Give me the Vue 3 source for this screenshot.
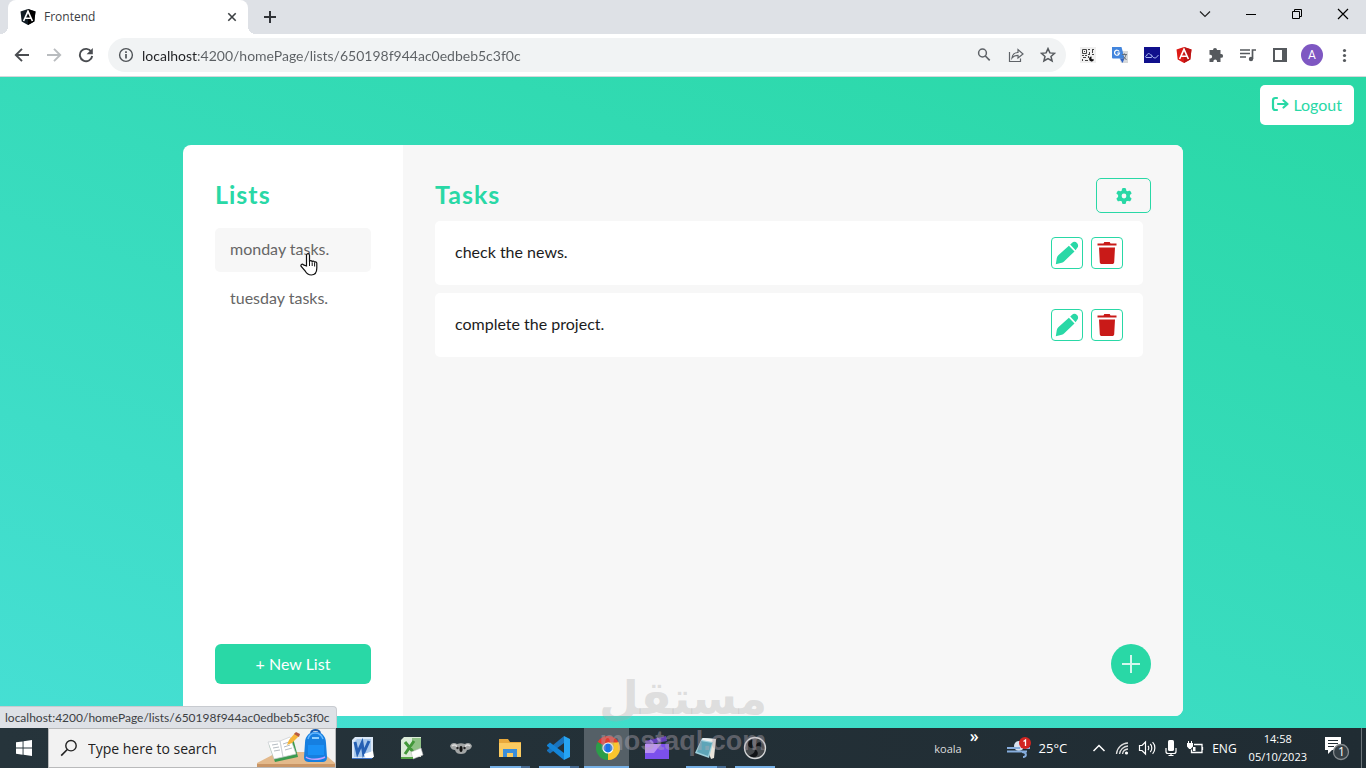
<script setup>
import { ref } from 'vue'

const address = ref('localhost:4200/homePage/lists/650198f944ac0edbeb5c3f0c')
const lists = [
  { id: 1, title: 'monday tasks.', active: true },
  { id: 2, title: 'tuesday tasks.', active: false }
]
const tasks = [
  { id: 1, title: 'check the news.' },
  { id: 2, title: 'complete the project.' }
]
</script>

<template>
  <div class="screen">
    <header class="tabstrip">
      <div class="tab">
        <svg class="fav" viewBox="0 0 16 16" width="16" height="16">
          <path d="M8 0 15.5 2.6 14.3 12.4 8 16 1.7 12.4.5 2.6Z" fill="#111c24" />
          <path d="M8 0 15.5 2.6 14.3 12.4 8 16Z" fill="#000" />
          <path d="M3.6 12 8 2.3 12.4 12M5.6 9.2h4.8" fill="none" stroke="#fff" stroke-width="1.6" />
        </svg>
        <span class="tab-title">Frontend</span>
        <button class="plain tab-close" aria-label="Close tab">
          <svg viewBox="0 0 10 10" width="10" height="10"><path d="M1.3 1.3l7.4 7.4M8.7 1.3L1.3 8.7" stroke="#3c4043" stroke-width="1.6" /></svg>
        </button>
      </div>
      <button class="plain new-tab" aria-label="New tab">
        <svg viewBox="0 0 14 14" width="14" height="14"><path d="M7 1v12M1 7h12" stroke="#303338" stroke-width="2" /></svg>
      </button>
      <div class="win">
        <button class="plain" aria-label="Search tabs"><svg viewBox="0 0 12 12" width="12" height="12"><path d="M1 3.5l5 5 5-5" fill="none" stroke="#222" stroke-width="1.2" /></svg></button>
        <button class="plain" aria-label="Minimize"><svg viewBox="0 0 12 12" width="12" height="12"><path d="M1 6.5h10" stroke="#000" /></svg></button>
        <button class="plain" aria-label="Restore"><svg viewBox="0 0 12 12" width="12" height="12"><path d="M1.5 3.5h7v7h-7zM3.5 3.5v-2h7v7h-2" fill="none" stroke="#000" /></svg></button>
        <button class="plain" aria-label="Close"><svg viewBox="0 0 12 12" width="12" height="12"><path d="M1 1l10 10M11 1L1 11" stroke="#000" stroke-width="1.2" /></svg></button>
      </div>
    </header>

    <nav class="toolbar">
      <div class="nav-buttons">
        <button class="plain" aria-label="Back"><svg viewBox="0 0 16 16" width="16" height="16"><path d="M15 8H2M8 1.8L1.8 8l6.2 6.2" fill="none" stroke="#4a4d51" stroke-width="1.9" /></svg></button>
        <button class="plain" aria-label="Forward"><svg viewBox="0 0 16 16" width="16" height="16"><path d="M1 8h13M8 1.8L14.2 8 8 14.2" fill="none" stroke="#b9bcbf" stroke-width="1.9" /></svg></button>
        <button class="plain" aria-label="Reload"><svg viewBox="0 0 16 16" width="16" height="16"><path d="M13.3 4.7A6.2 6.2 0 1 0 14.2 9" fill="none" stroke="#4a4d51" stroke-width="1.9" /><path d="M14.8 1v6.2H8.6z" fill="#4a4d51" /></svg></button>
      </div>
      <div class="omnibox">
        <svg viewBox="0 0 16 16" width="16" height="16"><circle cx="8" cy="8" r="6.4" fill="none" stroke="#4f5357" stroke-width="1.4" /><path d="M8 7v4.500M8 4.300v1.700" stroke="#4f5357" stroke-width="1.7" /></svg>
        <input v-model="address" class="address" aria-label="Address" />
        <button class="plain" aria-label="Zoom"><svg viewBox="0 0 16 16" width="16" height="16"><circle cx="6.5" cy="6" r="3.9" fill="none" stroke="#5f6368" stroke-width="1.5" /><path d="M9.4 9l4.300 4.300" stroke="#5f6368" stroke-width="1.7" /></svg></button>
        <button class="plain" aria-label="Share"><svg viewBox="0 0 16 16" width="16" height="16"><path d="M1.500 5v9.500h11V11.500" fill="none" stroke="#5f6368" stroke-width="1.2" /><path d="M4 11c.5-4 3-5.500 6-5.500V2.500L15 7l-5 4V8.300C7.500 8.300 5.500 9 4 11z" fill="none" stroke="#5f6368" stroke-width="1.2" /></svg></button>
        <button class="plain" aria-label="Bookmark"><svg viewBox="0 0 16 16" width="16" height="16"><path d="M8 1.600l1.900 4.300 4.700.400-3.600 3.100 1.100 4.600L8 11.600 3.900 14 5 9.400 1.400 6.300l4.700-.400z" fill="none" stroke="#55595d" stroke-width="1.5" /></svg></button>
      </div>
      <div class="extensions">
        <button class="plain" aria-label="QR code">
          <svg viewBox="0 0 16 16" width="16" height="16"><path d="M0 0h16v16H0z" fill="#f0f0f0" /><path d="M2.500 2.500h4v4h-4z" fill="none" stroke="#444" /><path d="M4 4h1v1H4zM8 2h2v1H8zM9 5h1v3H8V7h1zM12 2h2v1h-1v3h-1zM2 8h2v1H2zM5 8h2v1H5zM3 10h3v1H3zM2 12h1v2H2zM5 13h3v1H5zM8 9h1v2H8zM12 7h2v1h-2z" fill="#444" /><path d="M11.500 9.500a2.500 2.500 0 1 0 2.500 3l-2.500-.5z" fill="#111" /></svg>
        </button>
        <button class="plain" aria-label="Translate">
          <svg viewBox="0 0 16 16" width="16" height="16"><path d="M5 4h11v12H9z" fill="#d7d9db" /><path d="M0 0h9.500l3 11.500H1a1 1 0 0 1-1-1z" fill="#4285dd" /><path d="M8 11.500h4.500L10.500 16z" fill="#2c62c4" /><path d="M7.200 4.500A2.500 2.500 0 1 0 7.500 6H5.200" fill="none" stroke="#fff" stroke-width="1.2" /><path d="M10 7.500h5M12.500 6.500v1M14 7.500c-.5 3-2 4-3 5M11.500 9.500l3 3.500" fill="none" stroke="#68717a" /></svg>
        </button>
        <button class="plain" aria-label="Cloud extension">
          <svg viewBox="0 0 16 16" width="16" height="16"><path d="M0 0h16v16H0z" fill="#10108c" /><path d="M2 10.500h5c2 0 1.500-3-.5-2.500-.5-2-3.500-2-3.500.5-1.500 0-2 1.500-1 2M7 8.500c2 1 2 2.500 4 2.500 1.500 0 2-1.500 3.500-3" fill="none" stroke="#a8b8f0" /></svg>
        </button>
        <button class="plain" aria-label="Angular DevTools">
          <svg viewBox="0 0 16 16" width="16" height="16"><path d="M8 0 15.500 2.600 14.300 12.400 8 16 1.700 12.400.5 2.600Z" fill="#dd1b16" /><path d="M8 0 15.500 2.600 14.300 12.400 8 16Z" fill="#b91414" /><path d="M3.600 12 8 2.300 12.400 12M5.600 9.200h4.800" fill="none" stroke="#fff" stroke-width="1.6" /></svg>
        </button>
        <button class="plain" aria-label="Extensions">
          <svg viewBox="0 0 16 16" width="16" height="16"><path d="M5 3a2 2 0 0 1 4 0h3.500v4h.7a1.900 1.900 0 0 1 0 3.800h-.7V15H9v-.8a1.800 1.800 0 0 0-3.600 0v.8H1.500v-3.600h.8a1.800 1.800 0 0 0 0-3.700h-.8V3z" fill="#55595d" /></svg>
        </button>
        <button class="plain" aria-label="Media controls">
          <svg viewBox="0 0 16 16" width="16" height="16"><path d="M0 3h10M0 6.500h10M0 10h6" stroke="#55595d" stroke-width="1.6" /><path d="M12.500 12V3H16" fill="none" stroke="#55595d" stroke-width="1.7" /><circle cx="11" cy="12" r="2.2" fill="#55595d" /></svg>
        </button>
        <button class="plain" aria-label="Side panel">
          <svg viewBox="0 0 16 16" width="16" height="16"><path d="M2 2h12v12H2z" fill="none" stroke="#55595d" stroke-width="2" /><path d="M10 2H14v12h-4z" fill="#55595d" /></svg>
        </button>
        <button class="plain" aria-label="Profile"><span class="avatar">A</span></button>
        <button class="plain" aria-label="Menu">
          <svg viewBox="0 0 16 16" width="16" height="16"><g fill="#55595d"><circle cx="8.5" cy="3.5" r="1.6" /><circle cx="8.5" cy="8.5" r="1.6" /><circle cx="8.5" cy="13.500" r="1.6" /></g></svg>
        </button>
      </div>
    </nav>

    <main class="page">
      <div class="topbar">
        <button class="logout">
          <svg viewBox="0 0 18 16" width="18" height="16"><path d="M6 2H4.200A2.200 2.200 0 0 0 2 4.200v7.600A2.200 2.200 0 0 0 4.200 14H6M7 8h9M12.500 4.500L16.500 8l-4 3.500" fill="none" stroke="#29d8a6" stroke-width="2.2" stroke-linecap="round" stroke-linejoin="round" /></svg>
          <span>Logout</span>
        </button>
      </div>
      <div class="card">
        <aside class="sidebar">
          <h1>Lists</h1>
          <div class="list-menu">
            <a v-for="list in lists" :key="list.id" href="#" class="list-item" :class="{ active: list.active }">{{ list.title }}</a>
          </div>
          <button class="new-list">+ New List</button>
        </aside>
        <section class="content">
          <div class="content-head">
            <h1>Tasks</h1>
            <button class="settings" aria-label="List settings">
              <svg viewBox="0 0 16 16" width="16" height="16"><g fill="#29d8a6"><circle cx="8" cy="8" r="6" /><rect x="6" y="0" width="4" height="16" rx="1.2" /><rect x="6" y="0" width="4" height="16" rx="1.2" transform="rotate(60 8 8)" /><rect x="6" y="0" width="4" height="16" rx="1.2" transform="rotate(120 8 8)" /></g><circle cx="8" cy="8" r="2.4" fill="#f7f7f7" /></svg>
            </button>
          </div>
          <div class="tasks">
            <div v-for="task in tasks" :key="task.id" class="task">
              <span class="task-title">{{ task.title }}</span>
              <button class="icon-button" :aria-label="'Edit ' + task.title">
                <svg viewBox="0 0 24 24" width="24" height="24"><path d="M.8 23.200l1-6.200c.2-1.200.8-2 1.500-2.700L13.900 4.800l5.600 5.600L9.300 20.200c-.8.800-1.500 1.200-2.500 1.500zM15.200 3.600l1.700-1.700c1.600-1.600 3.800-1.200 5.100.1 1.300 1.300 1.700 3.500.1 5.100l-1.500 2.100z" fill="#29d8a6" /></svg>
              </button>
              <button class="icon-button" :aria-label="'Delete ' + task.title">
                <svg viewBox="0 0 24 24" width="24" height="24"><path d="M2.500 4.500v-2h6L9.300 1h5.400l.8 1.500h6v2zM4 6.500h16l-.8 14.700c-.1 1.100-.8 1.800-2.100 1.800H6.900c-1.300 0-2-.7-2.100-1.800z" fill="#c91a18" /></svg>
              </button>
            </div>
          </div>
          <button class="add" aria-label="New task"><svg viewBox="0 0 18 18" width="18" height="18"><path d="M9 0v18M0 9h18" stroke="#d4f7ed" stroke-width="2" /></svg></button>
        </section>
      </div>
      <div class="status">localhost:4200/homePage/lists/650198f944ac0edbeb5c3f0c</div>
    </main>

    <footer class="taskbar">
      <button class="plain start" aria-label="Start"><svg viewBox="0 0 16 16" width="16" height="16"><path d="M0 2.300L6.600 1.400v6.200H0zM7.500 1.200L16 0v7.600H7.500zM0 8.500h6.600v6.200L0 13.800zM7.500 8.500H16V16l-8.500-1.200z" fill="#fff" /></svg></button>
      <div class="search">
        <svg viewBox="0 0 18 18" width="18" height="18"><circle cx="11" cy="6.7" r="5.2" fill="none" stroke="#222" stroke-width="1.4" /><path d="M7.300 10.500L1.200 16.600" stroke="#222" stroke-width="1.6" /></svg>
        <input class="search-input" aria-label="Search" placeholder="Type here to search" />
        <svg class="search-art" viewBox="0 0 78 38" width="78" height="38">
          <path d="M0 38v-4l21-11h44l13 11v4z" fill="#e3b98b" /><path d="M0 35h78v3H0z" fill="#c99565" />
          <path d="M12 16l24-7 5 19-23 5z" fill="#3a9a4e" /><path d="M11 13l12-1 3 16-9 2zM23 12l10-4 6 17-13 3z" fill="#fff" stroke="#c7ccd0" stroke-width=".7" />
          <path d="M15 16l6-1M16 19l6-1M17 22l6-1M26 15l6-2M27 18l6-2M28 21l7-2" stroke="#b5bcc2" />
          <path d="M30 16l2-5 6-7 4 3-7 7z" fill="#f5b53a" /><path d="M37 5l2-2 4 2-1 3z" fill="#b65a43" />
          <path d="M54 4c1-4 8-4 9 0" fill="none" stroke="#155bb0" stroke-width="2" />
          <path d="M48 14c0-15 21-15 21 0l1 14c0 4-2 5-5 5H53c-4 0-6-1-6-5z" fill="#167fe0" /><path d="M51 10c2-8 12-8 15 0" fill="none" stroke="#65b8ff" stroke-width="1.5" /><path d="M51 16h16v10H51z" fill="#1a90f5" /><path d="M49 28c3 3 14 3 19 0" fill="none" stroke="#c3a0ff" stroke-width="1.5" /><path d="M55 9h7" stroke="#8fd0ff" stroke-width="2" />
        </svg>
      </div>
      <div class="apps">
        <button class="app" aria-label="Word">
          <svg viewBox="0 0 24 24" width="24" height="24"><path d="M4 1h18v21H1V4z" fill="#dce8f6" /><path d="M6 3h14v14l-6 4H3V6z" fill="#a9c9ec" /><path d="M4 6l2.500 11L11 7l1.500 10L18 5" fill="none" stroke="#2560b4" stroke-width="3" /><path d="M13 18l9-3 1 6-8 2z" fill="#fff" /><path d="M1 22.500h20" stroke="#3d72c5" /></svg>
        </button>
        <button class="app" aria-label="Excel">
          <svg viewBox="0 0 24 24" width="24" height="24"><path d="M4 1h17v20H1V4z" fill="#dcebd8" /><path d="M12 2h9v13h-9z" fill="#8fc185" /><path d="M5 6l9 11M14 5L5 18" stroke="#43983a" stroke-width="3" /><path d="M11 16l10-4 2 7-10 4z" fill="#fff" stroke="#bbb" stroke-width=".6" /><path d="M1 22h12" stroke="#57a548" stroke-width="2" /></svg>
        </button>
        <button class="app" aria-label="Koala">
          <svg viewBox="0 0 24 24" width="24" height="24"><path d="M1 10c2-4 5-3 7-2 3-1 5-1 8 0 2-1 5-2 7 2-1 3-3 4-5 4-1 3-3 4-6 4s-5-1-6-4c-2 0-4-1-5-4z" fill="#a3a6a6" /><path d="M3 10c2-2 4-1 5 1M21 10c-2-2-4-1-5 1" fill="none" stroke="#ddd" stroke-width="1.5" /><ellipse cx="12" cy="13" rx="1.6" ry="3" fill="#111" /><circle cx="8.5" cy="12" r="1.2" fill="#222" /><circle cx="15.5" cy="12" r="1.2" fill="#222" /></svg>
        </button>
        <button class="app open stacked" aria-label="File Explorer">
          <svg viewBox="0 0 24 24" width="24" height="24"><path d="M1 3h9l2 3h11v15H1z" fill="#e9a93b" /><path d="M1 7h22v14H1z" fill="#fbcb61" /><path d="M5 13h14v8h-4v-4H9v4H5z" fill="#3b8edb" /></svg>
        </button>
        <button class="app open stacked" aria-label="Visual Studio Code">
          <svg viewBox="0 0 24 24" width="24" height="24"><path d="M17 0l6 3v18l-6 3z" fill="#26a4f2" /><path d="M17 7L3 17.500 0 15v-1L17 0z" fill="#1a73bd" /><path d="M17 17L3 6.500 0 9v1l17 14z" fill="#1485d8" /></svg>
        </button>
        <button class="app open current" aria-label="Chrome">
          <svg viewBox="0 0 24 24" width="24" height="24"><path d="M12 12L1.600 6A12 12 0 0 1 22.400 6z" fill="#e33b2e" /><path d="M12 12L22.400 6A12 12 0 0 1 12 24z" fill="#fbc52d" /><path d="M12 12v12A12 12 0 0 1 1.600 6z" fill="#2c9d49" /><path d="M12 6.500h10.700L17 14z" fill="#fbc52d" /><circle cx="12" cy="12" r="5.6" fill="#fff" /><circle cx="12" cy="12" r="4.4" fill="#1a73e8" /></svg>
        </button>
        <button class="app" aria-label="Video editor">
          <svg viewBox="0 0 24 24" width="24" height="24"><path d="M0 5l21-5 1 5L1 9z" fill="#6540b8" /><path d="M0 8h24v15H0z" fill="#7c50ed" /><path d="M0 8h16l-7 9H0z" fill="#bb91f2" /><path d="M5 4l3 3M12 2l3 3" stroke="#9c7be2" stroke-width="2" /></svg>
        </button>
        <button class="app open stacked" aria-label="Notepad">
          <svg viewBox="0 0 24 24" width="24" height="24"><path d="M9 2l13 1-2 19-3 1z" fill="#e9e4db" /><path d="M8 2l12 1-5 19L1 17z" fill="#9fd0dc" /><path d="M7 5l11 2-4 13-11-4z" fill="#5ea5b8" /><path d="M9 2l11 1-1 3L8 4z" fill="#eee" /></svg>
        </button>
        <button class="app open" aria-label="OBS">
          <svg viewBox="0 0 24 24" width="24" height="24"><circle cx="12" cy="12" r="10.5" fill="#45494c" stroke="#d5d7d8" stroke-width="1.3" /><g fill="#111417"><path d="M11.500 11.500C7 13.500 4 10 5.500 6.500 6.500 4.500 8.500 3.500 10 3.500 8 6 9 9.500 11.500 11.500z" /><path d="M12.500 11c.5-5 5-6 7.500-3 1.500 2 1 4.500 0 6-1-3.500-4.500-5-7.500-3z" /><path d="M12 13c4 2.500 3.500 7 0 8-2.500.5-5-.5-6-2 3.500 0 6-2.500 6-6z" /></g></svg>
        </button>
      </div>
      <div class="tray">
        <span class="koala">koala</span>
        <span class="more">»</span>
        <button class="plain weather">
          <svg viewBox="0 0 24 22" width="24" height="22"><circle cx="12" cy="9" r="5" fill="#d8e2ef" /><path d="M0 11h13M0 14.500h20M17 11h6" stroke="#86addd" stroke-width="2" /><path d="M15 15c5 0 5 5 1 5" fill="none" stroke="#86addd" stroke-width="2" /><circle cx="18" cy="6" r="6" fill="#d22522" /><path d="M16.500 4.500l2-1.500v6" fill="none" stroke="#fff" stroke-width="1.3" /></svg>
          <span>25°C</span>
        </button>
        <div class="tray-icons">
          <button class="plain" aria-label="Show hidden icons"><svg viewBox="0 0 16 16" width="16" height="16"><path d="M2.500 11L8 5.500l5.500 5.500" fill="none" stroke="#fff" stroke-width="1.5" /></svg></button>
          <button class="plain" aria-label="Network"><svg viewBox="0 0 16 16" width="16" height="16"><g fill="none" stroke="#ddd" stroke-width="1.3"><path d="M1.500 14A12 12 0 0 1 13 3" /><path d="M4.500 14A9 9 0 0 1 13 6" /><path d="M7.500 14A6 6 0 0 1 13 9" /></g><circle cx="11.5" cy="13" r="1.6" fill="#fff" /></svg></button>
          <button class="plain" aria-label="Volume"><svg viewBox="0 0 18 16" width="18" height="16"><g fill="none" stroke="#fff" stroke-width="1.2"><path d="M1.500 5.500h2.500l3.500-3.500v12L4 10.500H1.500z" /><path d="M10 6c1 1 1 3 0 4M12.300 4c2 2 2 6 0 8M14.600 2.200c3 3 3 8.600 0 11.600" /></g></svg></button>
          <button class="plain" aria-label="Microphone"><svg viewBox="0 0 16 16" width="16" height="16"><rect x="5" y="0" width="6" height="11" rx="1.5" fill="#fff" /><path d="M3 8v3.500q0 2 2 2h6q2 0 2-2V8M8 13.500v2.500M5.500 15.500h5" fill="none" stroke="#fff" stroke-width="1.2" /></svg></button>
          <button class="plain" aria-label="Battery"><svg viewBox="0 0 18 16" width="18" height="16"><path d="M8 4.500h8v8H5.500v-3M16.500 7v3" fill="none" stroke="#fff" stroke-width="1.3" /><path d="M7 7h2.500v4H7zM1 3h6v3.500L4.800 9H3.200L1 6.500z" fill="#fff" /><path d="M2.500 1v3M5.500 1v3" stroke="#fff" /></svg></button>
        </div>
        <span class="lang">ENG</span>
        <div class="clock"><span>14:58</span><span>05/10/2023</span></div>
        <button class="plain action" aria-label="Notifications"><svg viewBox="0 0 26 26" width="26" height="26"><path d="M1 2h16v13H8l-4 4v-4H1z" fill="#fff" /><path d="M4 5.500h10M4 8.500h10M4 11.500h6" stroke="#222e35" /><circle cx="17" cy="17" r="7.500" fill="#353f45" stroke="#858b8e" stroke-width="1.3" /></svg><span class="count">1</span></button>
        <button class="plain show-desktop" aria-label="Show desktop"></button>
      </div>
    </footer>

    <div class="watermark"><span class="mark-ar" lang="ar" dir="rtl">مستقل</span><span class="mark-en">mostaql.com</span></div>
    <svg class="pointer" viewBox="0 0 18 24" width="18" height="24"><path d="M6.500 14V3.500c0-2.500 3-2.500 3 0V10c0-2 2.700-1.800 2.700.2 0-1.600 2.400-1.400 2.400.5 0-1.400 2.200-1.200 2.200.6V16c0 4-2 7-5.500 7-3 0-4.700-1.500-6-3.800L1.200 14.500c-1-2 1-3 2.300-1.600z" fill="#fff" stroke="#111" stroke-width="1.2" /><path d="M9.500 10v4M12.200 10.500V14M14.600 11v3.500" stroke="#111" /></svg>
  </div>
</template>

<style>
html, body { margin: 0; }
</style>

<style scoped>
* { box-sizing: border-box; }
.screen { position: relative; display: flex; flex-direction: column; min-height: 100vh; font-family: "Open Sans", "Noto Sans", sans-serif; color: #202124; overflow: hidden; }
button, input { font-family: inherit; }
button { cursor: pointer; }
svg { display: block; flex: none; }
.plain { display: flex; align-items: center; justify-content: center; padding: 0; border: 0; background: none; color: inherit; }

.tabstrip { display: flex; align-items: stretch; height: 34px; padding-left: 8px; background: #dee1e6; }
.tab { position: relative; display: flex; align-items: center; gap: 8px; width: 240px; padding: 0 11px 0 12px; border-radius: 8px 8px 0 0; background: #fff; }
.tab::before, .tab::after { content: ""; position: absolute; bottom: 0; width: 8px; height: 8px; }
.tab::before { left: -8px; background: radial-gradient(circle at 0 0, transparent 8px, #fff 8px); }
.tab::after { right: -8px; background: radial-gradient(circle at 100% 0, transparent 8px, #fff 8px); }
.tab-title { flex: 1; font-size: 12px; line-height: 16px; color: #3c4043; }
.new-tab { width: 28px; margin-left: 8px; }
.win { display: flex; margin-left: auto; padding-bottom: 6px; }
.win .plain { width: 46px; }

.toolbar { display: flex; align-items: center; height: 43px; padding-right: 6px; background: #fff; border-bottom: 1px solid #d5d7da; }
.nav-buttons, .extensions { display: flex; align-items: center; }
.nav-buttons { padding: 0 6px; }
.nav-buttons .plain, .extensions .plain { width: 32px; height: 32px; }
.omnibox { display: flex; align-items: center; flex: 1; height: 34px; padding: 0 2px 0 10px; border-radius: 17px; background: #f1f3f4; }
.omnibox .plain { width: 32px; height: 32px; }
.address { flex: 1; min-width: 0; height: 24px; margin-left: 8px; padding: 0; border: 0; outline: 0; font-family: Lato, sans-serif; font-size: 14px; color: transparent; background: linear-gradient(90deg, #202124 55px, #5b5f63 55px); background-clip: text; -webkit-background-clip: text; }
.extensions { padding-left: 6px; }
.avatar { width: 22px; height: 22px; border-radius: 50%; background: #7e57c2; color: #fff; font: 12px/22px Roboto, sans-serif; text-align: center; }

.page { position: relative; flex: 1; display: flex; flex-direction: column; align-items: center; padding: 8px 12px 12px; background: linear-gradient(20deg, #46dfd4, #29d8a5); font-family: Lato, "Open Sans", sans-serif; font-size: 16px; }
.topbar { display: flex; justify-content: flex-end; width: 100%; margin-bottom: 20px; }
.logout { display: flex; align-items: center; gap: 4px; height: 40px; padding: 0 12px 2px 11px; border: 0; border-radius: 5px; background: #fff; color: #29d8a6; font-size: 16px; }
.card { flex: 1; display: flex; width: 100%; max-width: 1000px; border-radius: 8px; overflow: hidden; background: #fff; }
.sidebar { display: flex; flex-direction: column; width: 220px; padding: 32px; }
h1 { margin: 0; color: #29d8a6; font-family: Lato, sans-serif; font-size: 25px; font-weight: 700; line-height: 34px; letter-spacing: 1px; }
.list-menu { display: flex; flex-direction: column; gap: 5px; margin-top: 17px; }
.list-item { height: 44px; padding: 0 15px; border-radius: 5px; line-height: 42px; color: #666; text-decoration: none; }
.list-item.active { background: #f7f7f7; }
.new-list { height: 40px; margin-top: auto; padding: 0 0 2px; border: 0; border-radius: 6px; background: #29d8a6; color: #fff; font-size: 16px; }
.content { flex: 1; display: flex; flex-direction: column; padding: 32px; background: #f7f7f7; }
.content-head { display: flex; align-items: flex-start; justify-content: space-between; height: 36px; }
.settings { display: flex; align-items: center; justify-content: center; align-self: flex-end; width: 55px; height: 35px; padding: 0; border: 1px solid #29d8a6; border-radius: 5px; background: transparent; }
.tasks { display: flex; flex-direction: column; gap: 8px; margin-top: 8px; padding-right: 8px; }
.task { display: flex; align-items: center; gap: 8px; height: 64px; padding: 0 20px; border-radius: 5px; background: #fff; }
.task-title { flex: 1; padding-bottom: 3px; color: #1c1c1c; }
.icon-button { display: flex; align-items: center; justify-content: center; width: 32px; height: 32px; padding: 0; border: 1px solid #29d8a6; border-radius: 4px; background: #fff; }
.add { display: flex; align-items: center; justify-content: center; align-self: flex-end; width: 40px; height: 40px; margin-top: auto; padding: 0; border: 0; border-radius: 50%; background: #29d8a6; }
.status { position: absolute; left: 0; bottom: 0; height: 22px; padding: 0 6px 0 5px; border: 1px solid #c8cbd0; border-width: 1px 1px 0 0; border-radius: 0 4px 0 0; background: #dee1e6; color: #3c4043; font: 12px/21px Lato, sans-serif; }

.taskbar { display: flex; height: 40px; background: linear-gradient(90deg, #26343b, #202c33); color: #fff; font-size: 12px; }
.start { width: 48px; }
.search { display: flex; align-items: center; width: 288px; padding-left: 11px; border: 1px solid #b9babb; background: #f2f2f2; }
.search-input { flex: 1; min-width: 0; margin-left: 10px; padding: 0; border: 0; outline: 0; background: none; font-size: 14px; color: #222; }
.search-input::placeholder { color: #222; opacity: 1; }
.apps { display: flex; margin-left: 2px; }
.app { position: relative; display: flex; align-items: center; justify-content: center; width: 49px; padding: 0; border: 0; background: none; }
.app.open::after { content: ""; position: absolute; left: 5px; right: 4px; bottom: 0; height: 2px; background: #76b0e6; }
.app.stacked::after { background: linear-gradient(90deg, #76b0e6 31px, #476b92 31px); }
.app.current { background: linear-gradient(90deg, transparent 1px, #556067 1px, #556067 46px, transparent 46px); }
.app.current::after { left: 1px; right: 3px; }
.tray { display: flex; align-items: center; margin-left: auto; }
.koala { color: #ddd; font-size: 11px; }
.more { align-self: flex-start; margin: 0 28px 0 8px; font-size: 16px; font-weight: 600; line-height: 16px; }
.weather { gap: 8px; font-size: 13px; }
.tray-icons { display: flex; margin: 0 5px 0 20px; }
.tray-icons .plain { width: 24px; }
.lang { margin: 0 12px 0 0; }
.clock { display: flex; flex-direction: column; align-items: center; font-size: 11px; line-height: 18px; }
.action { position: relative; margin: 0 11px 0 17px; }
.count { position: absolute; left: 10px; top: 9px; width: 15px; text-align: center; font-size: 12px; line-height: 16px; }
.show-desktop { align-self: stretch; width: 5px; border-left: 1px solid #6c757a; }

.watermark { position: absolute; left: 599px; top: 674px; width: 168px; display: flex; flex-direction: column; align-items: center; gap: 4px; pointer-events: none; }
.mark-ar { color: rgba(170, 170, 170, .32); font: bold 46px/48px "DejaVu Sans", sans-serif; }
.mark-en { color: rgba(178, 168, 178, .42); font: bold 27px/30px "Liberation Sans", sans-serif; }
.pointer { position: absolute; left: 300px; top: 252px; pointer-events: none; }
</style>
